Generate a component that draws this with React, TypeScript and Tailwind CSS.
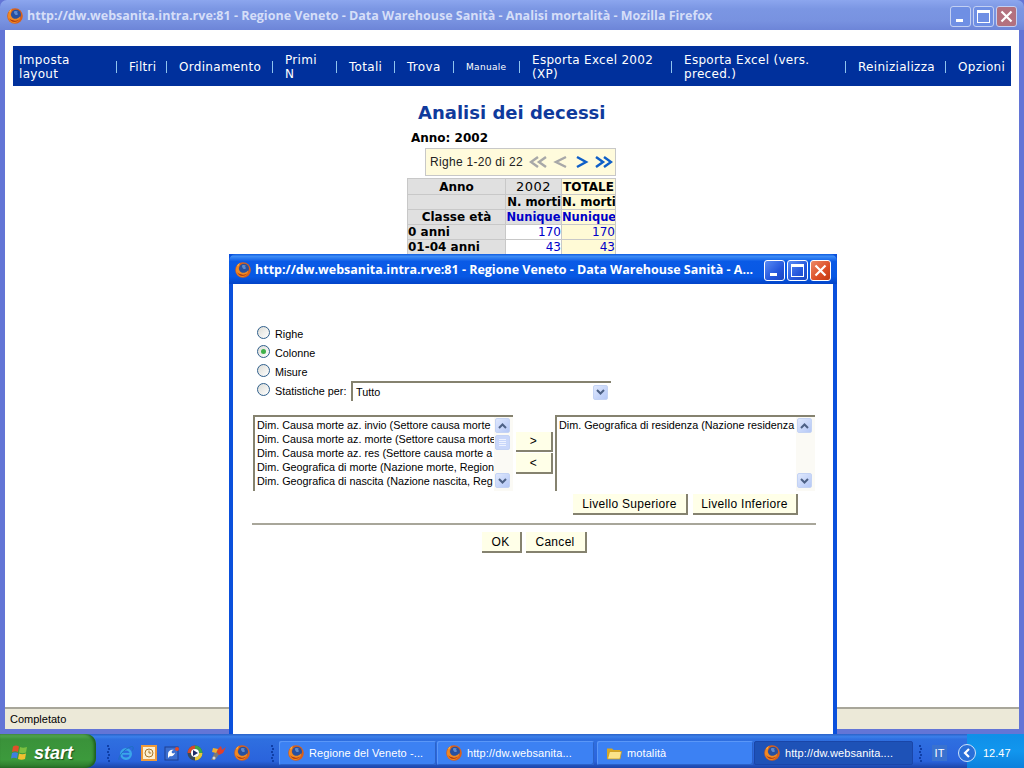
import { type ReactNode } from 'react'

const navItems = [
  { label: 'Imposta layout', width: 'w-[85px]' },
  { label: 'Filtri', width: 'w-[25px]' },
  { label: 'Ordinamento', width: 'w-[81px]' },
  { label: 'Primi N', width: 'w-[39px]' },
  { label: 'Totali', width: 'w-[33px]' },
  { label: 'Trova', width: 'w-[34px]' },
  { label: 'Manuale', width: 'w-[41px]', small: true },
  { label: 'Esporta Excel 2002 (XP)', width: 'w-[127px]' },
  { label: 'Esporta Excel (vers. preced.)', width: 'w-[149px]' },
  { label: 'Reinizializza', width: 'w-[75px]' },
  { label: 'Opzioni', width: 'w-[46px]' },
]

// testo tagliato come nella lista originale
const leftList = [
  'Dim. Causa morte az. invio (Settore causa morte',
  'Dim. Causa morte az. morte (Settore causa morte',
  'Dim. Causa morte az. res (Settore causa morte a',
  'Dim. Geografica di morte (Nazione morte, Region',
  'Dim. Geografica di nascita (Nazione nascita, Reg',
]

function Firefox({ size = 16 }: { size?: number }) {
  return (
    <svg width={size} height={size} viewBox="0 0 16 16" className="shrink-0">
      <circle cx="8" cy="8" r="7.800" fill="#d9601a" />
      <circle cx="9" cy="6.800" r="5" fill="#27509f" />
      <path d="M7 3.500c1.500-.8 3-.5 4 .3-.8.2-1 .8-.5 1.400.7.8.2 1.800-.9 1.900-1 .1-1.600-.6-2.100-1.300C7 5.100 7 4.300 7 3.500z" fill="#5d8ad0" />
      <path d="M1 8c0-3 1.500-5.500 4-7-.6 1-.8 2-.5 2.700C3.400 5 3.400 7 4.300 8.500c1.100 1.800 3.200 2.600 5.200 2.200 1.500-.3 2.900-1.300 3.800-2.700 0 3.300-2.700 7-6 7C4 15 1 12 1 8z" fill="#f08a24" />
      <path d="M2 10c1 2.500 3 4 5.500 4 2 0 4-1 5-3-1.500 1.500-3.500 2-5.500 1.500C5 12 3 11.500 2 10z" fill="#b5400f" />
      <path d="M5 1c-1.500.8-2.600 2.100-3.200 3.500.6-.6 1.300-1 2-1.200C4 2.500 4.400 1.700 5 1z" fill="#fbc04a" />
    </svg>
  )
}

function WinButton({ kind, inactive }: { kind: 'min' | 'max' | 'close'; inactive?: boolean }) {
  let bg = inactive ? 'bg-[#6f8fe4]' : 'bg-[linear-gradient(135deg,#5a8cf5,#2456dc_60%,#1c46c0)]'
  if (kind === 'close') {
    bg = inactive ? 'bg-[#b3717f]' : 'bg-[linear-gradient(135deg,#ec8a68,#dc4e26_60%,#c23a12)]'
  }
  return (
    <div
      className={`flex h-[21px] w-[21px] items-center justify-center rounded-[3px] border ${inactive ? 'border-[#c3d0f3]' : 'border-white'} ${bg}`}
    >
      {kind === 'min' && <div className="mt-[9px] -ml-[3px] h-[3px] w-[7px] bg-white" />}
      {kind === 'max' && <div className="h-[13px] w-[13px] border border-t-[3px] border-white" />}
      {kind === 'close' && (
        <svg width="13" height="13" viewBox="0 0 13 13">
          <path d="M1.500 1.500l10 10M11.500 1.500l-10 10" stroke="#fff" strokeWidth="2.200" />
        </svg>
      )}
    </div>
  )
}

function Radio({ checked }: { checked?: boolean }) {
  return (
    <div className="flex h-[13px] w-[13px] shrink-0 items-center justify-center rounded-full border border-[#2f5f8c] bg-[linear-gradient(135deg,#dcdcd6,#ffffff)]">
      {checked && <div className="h-[5px] w-[5px] rounded-full bg-[#3fb14a]" />}
    </div>
  )
}

function ScrollArrow({ up }: { up?: boolean }) {
  return (
    <div className="flex h-[15px] w-[15px] items-center justify-center rounded-[2px] border border-[#c4d3f4] bg-[linear-gradient(135deg,#dfe8fd,#b5c8f6)]">
      <svg width="9" height="6" viewBox="0 0 9 6">
        <path d={up ? 'M1 5l3.500-3.500L8 5' : 'M1 1l3.500 3.500L8 1'} fill="none" stroke="#4d6185" strokeWidth="2" />
      </svg>
    </div>
  )
}

function ListBox({ items, thumb }: { items: string[]; thumb?: boolean }) {
  return (
    <div className="flex h-[76px] w-[260px] shrink-0 border-t-2 border-l-2 border-[#85826f] bg-white">
      <div className="min-w-0 flex-1 overflow-hidden pt-px pl-[2px]">
        {items.map((item) => (
          <div key={item} className="h-[14px] overflow-hidden text-[10.800px] leading-[14px] whitespace-nowrap text-black">
            {item}
          </div>
        ))}
      </div>
      <div className="flex w-[19px] shrink-0 flex-col justify-between bg-[#fbfaf5] pt-px pr-[3px] pb-[3px] pl-px">
        <div>
          <ScrollArrow up />
          {thumb && (
            <div className="mt-[2px] flex h-[15px] w-[15px] flex-col items-center justify-center gap-px rounded-[2px] border border-[#c4d3f4] bg-[#c9d7fa]">
              <div className="h-px w-[7px] bg-[#eef3ff]" />
              <div className="h-px w-[7px] bg-[#eef3ff]" />
              <div className="h-px w-[7px] bg-[#eef3ff]" />
              <div className="h-px w-[7px] bg-[#eef3ff]" />
            </div>
          )}
        </div>
        <ScrollArrow />
      </div>
    </div>
  )
}

function Btn({ children, width, height = 'h-[21px]' }: { children: ReactNode; width: string; height?: string }) {
  return (
    <div
      className={`flex items-center justify-center border-r-2 border-b-2 border-[#85826f] bg-[#ffffe8] text-[12px] tracking-[0.3px] text-black ${width} ${height}`}
    >
      {children}
    </div>
  )
}

function Grip() {
  return (
    <div className="flex w-[3px] shrink-0 flex-col gap-px">
      {[0, 1, 2, 3, 4, 5].map((i) => (
        <div key={i} className={`h-[2px] w-[2px] bg-[#0f3fa8] ${i % 2 ? 'ml-px' : ''}`} />
      ))}
    </div>
  )
}

function TaskButton({ icon, label, active, width }: { icon: ReactNode; label: string; active?: boolean; width: string }) {
  return (
    <div
      className={`flex h-[24px] shrink-0 items-center gap-[5px] rounded-[2px] pl-[9px] text-[11px] tracking-[0.1px] whitespace-nowrap text-white ${width} ${active ? 'border border-[#1a46a8] bg-[#1e52b7]' : 'bg-[#3c81f3] shadow-[inset_1px_1px_0_#5a97f8,inset_-1px_-1px_0_#2b62c8]'}`}
    >
      {icon}
      <span>{label}</span>
    </div>
  )
}

function Folder() {
  return (
    <svg width="16" height="14" viewBox="0 0 16 14" className="shrink-0">
      <path d="M1 2.500h5l1.500 1.500H14v9H1z" fill="#d8a823" />
      <path d="M1.500 13L3.500 5.500H15.500L14 13z" fill="#fbe38a" stroke="#c99a1e" strokeWidth=".8" />
    </svg>
  )
}

function QuickLaunch() {
  return (
    <div className="flex items-center gap-[7px]">
      <svg width="16" height="16" viewBox="0 0 16 16">
        <circle cx="8" cy="9" r="4.800" fill="none" stroke="#3aa6ea" strokeWidth="2.400" />
        <path d="M3.500 8.800h9.500" stroke="#3aa6ea" strokeWidth="1.800" />
        <rect x="9.500" y="10" width="5" height="1.800" fill="#00000000" />
        <path d="M1 15C0 12.500 5 4 13.500 1.500c2-.3 2.200 1.500 1 4" fill="none" stroke="#1d6fc0" strokeWidth="1" />
      </svg>
      <div className="flex h-[16px] w-[16px] items-center justify-center border-2 border-[#ee9a3a] bg-[#fdf0d0]">
        <svg width="10" height="10" viewBox="0 0 10 10">
          <circle cx="5" cy="5" r="4" fill="none" stroke="#a8762a" strokeWidth="1" />
          <path d="M5 2.500V5h2.200" fill="none" stroke="#a8762a" strokeWidth="1" />
        </svg>
      </div>
      <svg width="16" height="16" viewBox="0 0 16 16">
        <rect x="1" y="2" width="13" height="13" fill="#3c6fd0" stroke="#1c3f90" />
        <path d="M4 9c0-3 3-5 6-4-2 0-3 2-2 3s3 0 3-1c0 3-3 5-5 4l-2 2z" fill="#fff" />
        <circle cx="13" cy="4" r="2" fill="#e04a2a" />
      </svg>
      <svg width="16" height="16" viewBox="0 0 16 16">
        <circle cx="8" cy="8" r="7.500" fill="#3a4a5a" />
        <path d="M8 .5A7.500 7.500 0 0 1 15.500 8H12A4 4 0 0 0 8 4z" fill="#3aa84a" />
        <path d="M.5 8A7.500 7.500 0 0 1 8 .5V4a4 4 0 0 0-4 4z" fill="#d84a2a" />
        <path d="M8 15.500A7.500 7.500 0 0 0 15.500 8H12a4 4 0 0 1-4 4z" fill="#e8c83a" />
        <circle cx="8" cy="8" r="4" fill="#fff" />
        <path d="M6 5l5 3-5 3z" fill="#1d2a66" />
      </svg>
      <svg width="17" height="16" viewBox="0 0 17 16">
        <path d="M1 15L6 5l4 3-5 7z" fill="#7a7a7a" />
        <path d="M6 6l5-5 1 4 4-3-3 6-4 2z" fill="#e0402a" />
        <path d="M3 3l5 1-2 4-4-1z" fill="#f0b030" />
        <circle cx="4" cy="13" r="1.500" fill="#d5d5d5" />
      </svg>
      <Firefox />
    </div>
  )
}

export default function App() {
  return (
    <div className="relative flex h-[768px] w-[1024px] flex-col overflow-hidden bg-white font-['Liberation_Sans',sans-serif]">
      <div className="relative min-h-0 flex-1">
        {/* finestra principale */}
        <div className="flex h-full flex-col bg-[#6375d6] px-[5px] pb-[5px]">
          <div className="-mx-[5px] flex h-[30px] shrink-0 items-center rounded-t-[7px] bg-[linear-gradient(#8ca6ee,#7b96e3_30%,#7892e0_70%,#6d85d8)] pt-[2px] pr-[7px] pl-[7px]">
            <Firefox />
            <div className="ml-[4px] flex-1 font-['Open_Sans',sans-serif] text-[12.500px] font-bold whitespace-nowrap text-[#d5def8]">
              http://dw.websanita.intra.rve:81 - Regione Veneto - Data Warehouse Sanità - Analisi mortalità - Mozilla Firefox
            </div>
            <div className="flex gap-[2px]">
              <WinButton kind="min" inactive />
              <WinButton kind="max" inactive />
              <WinButton kind="close" inactive />
            </div>
          </div>
          <div className="flex min-h-0 flex-1 flex-col bg-white pt-[16px]">
            <div className="mr-[8px] ml-[8px] flex h-[40px] shrink-0 items-center bg-[#00309c] pt-px pl-[6px] font-['DejaVu_Sans',sans-serif] text-[12px] leading-[14px] tracking-[0.3px] text-white">
              {navItems.map((item, i) => (
                <div key={item.label} className="flex items-center">
                  {i > 0 && <div className="mr-[12px] ml-[12px] h-[12px] w-px bg-[#8fc4ee]" />}
                  <div className={`${item.width} ${item.small ? 'text-[9px]' : ''}`}>{item.label}</div>
                </div>
              ))}
            </div>
            <div className="flex-1 font-['DejaVu_Sans',sans-serif]">
              <div className="mt-[16px] pl-[413px] text-[18px] leading-[22px] font-bold text-[#0f3a9c]">Analisi dei decessi</div>
              <div className="mt-[6px] pl-[406px] text-[12px] leading-[16px] font-bold text-black">Anno: 2002</div>
              <div className="mt-[2px] ml-[420px] flex h-[28px] w-[191px] items-center border border-[#c8c8c8] bg-[#fffbdc] pb-px pl-[4px] font-['Liberation_Sans',sans-serif] text-[12px] tracking-[0.3px] text-[#222]">
                <span>Righe 1-20 di 22</span>
                <svg width="84" height="14" viewBox="0 0 84 14" className="ml-[6px]">
                  <path d="M9 2L2 7l7 5M17 2L10 7l7 5" fill="none" stroke="#a8a8a8" strokeWidth="2.500" />
                  <path d="M37 2l-10 5 10 5" fill="none" stroke="#a8a8a8" strokeWidth="2.500" />
                  <path d="M48 2l9 5-9 5" fill="none" stroke="#0f5fc8" strokeWidth="2.500" />
                  <path d="M67 2l7 5-7 5M75 2l7 5-7 5" fill="none" stroke="#0f5fc8" strokeWidth="2.500" />
                </svg>
              </div>
              <table className="mt-[2px] ml-[402px] w-[208px] table-fixed border-collapse text-[12px] leading-[14px] text-black">
                <colgroup>
                  <col className="w-[98px]" />
                  <col className="w-[56px]" />
                  <col className="w-[54px]" />
                </colgroup>
                <tbody className="[&_td]:h-[15px] [&_td]:overflow-hidden [&_td]:border [&_td]:border-[#c8c8c8] [&_td]:p-0 [&_td]:whitespace-nowrap">
                  <tr className="[&_td]:h-[16px]">
                    <td className="bg-[#e0e0e0] text-center font-bold">Anno</td>
                    <td className="bg-[#e0e0e0] text-center text-[13px] tracking-[0.5px]">2002</td>
                    <td className="bg-[#fffad6] text-center font-bold">TOTALE</td>
                  </tr>
                  <tr>
                    <td className="bg-[#e0e0e0]" />
                    <td className="bg-[#e0e0e0] text-right text-[11.700px] font-bold">N. morti</td>
                    <td className="bg-[#fffad6] text-right text-[11.700px] font-bold">N. morti</td>
                  </tr>
                  <tr>
                    <td className="bg-[#e0e0e0] text-center font-bold">Classe età</td>
                    <td className="bg-[#e0e0e0] text-center text-[11.500px] font-bold text-[#0000c8]">Nunique</td>
                    <td className="bg-[#fffad6] text-center text-[11.500px] font-bold text-[#0000c8]">Nunique</td>
                  </tr>
                  <tr>
                    <td className="bg-[#e0e0e0] font-bold">0 anni</td>
                    <td className="bg-white pr-px text-right text-[#0000c8]">170</td>
                    <td className="bg-[#fffad6] pr-px text-right text-[#0000c8]">170</td>
                  </tr>
                  <tr>
                    <td className="bg-[#e0e0e0] font-bold">01-04 anni</td>
                    <td className="bg-white pr-px text-right text-[#0000c8]">43</td>
                    <td className="bg-[#fffad6] pr-px text-right text-[#0000c8]">43</td>
                  </tr>
                </tbody>
              </table>
            </div>
            <div className="flex h-[22px] shrink-0 items-center border-t-2 border-[#a8a69a] bg-[#ece9d8] pl-[5px] font-['Liberation_Sans',sans-serif] text-[11px] text-black">
              Completato
            </div>
          </div>
        </div>

        {/* finestra di dialogo */}
        <div className="absolute top-[254px] bottom-0 left-[229px] flex w-[608px] flex-col bg-[#0a50dc] px-[4px]">
          <div className="-mx-[4px] flex h-[30px] shrink-0 items-center rounded-t-[7px] bg-[linear-gradient(#0f5ce0,#3d8cf5_8%,#0a5ae6_25%,#0758e4_75%,#0344c8)] pt-[2px] pr-[6px] pl-[6px]">
            <Firefox />
            <div className="ml-[4px] min-w-0 flex-1 overflow-hidden font-['Open_Sans',sans-serif] text-[12.500px] font-bold whitespace-nowrap text-white">
              http://dw.websanita.intra.rve:81 - Regione Veneto - Data Warehouse Sanità - A...
            </div>
            <div className="ml-[6px] flex gap-[2px]">
              <WinButton kind="min" />
              <WinButton kind="max" />
              <WinButton kind="close" />
            </div>
          </div>
          <div className="min-h-0 flex-1 bg-white pt-[42px] pl-[20px] text-[10.800px] text-black">
            <div className="pl-[4px]">
              {['Righe', 'Colonne', 'Misure'].map((label) => (
                <div key={label} className="flex h-[19px] items-start gap-[5px]">
                  <Radio checked={label === 'Colonne'} />
                  <span className="mt-px leading-[14px]">{label}</span>
                </div>
              ))}
              <div className="flex h-[19px] items-start gap-[5px]">
                <Radio />
                <span className="mt-px w-[72px] leading-[14px] whitespace-nowrap">Statistiche per:</span>
                <div className="-mt-[2px] -ml-[1px] flex h-[20px] w-[260px] items-center border-t-2 border-l-2 border-[#85826f] bg-white pl-[3px]">
                  <span className="flex-1">Tutto</span>
                  <div className="mr-[3px]">
                    <ScrollArrow />
                  </div>
                </div>
              </div>
            </div>
            <div className="mt-[13px] flex items-start">
              <ListBox items={leftList} thumb />
              <div className="mt-[17px] ml-[3px] flex flex-col gap-px">
                <Btn width="w-[37px]" height="h-[20px]">&gt;</Btn>
                <Btn width="w-[37px]">&lt;</Btn>
              </div>
              <div className="ml-[2px]">
                <ListBox items={['Dim. Geografica di residenza (Nazione residenza']} />
              </div>
            </div>
            <div className="mt-[3px] ml-[320px] flex gap-[5px]">
              <Btn width="w-[115px]">Livello Superiore</Btn>
              <Btn width="w-[105px]">Livello Inferiore</Btn>
            </div>
            <div className="mt-[8px] -ml-px h-[2px] w-[564px] bg-[#a8a69a]" />
            <div className="mt-[7px] -ml-px flex w-[564px] justify-center gap-[4px]">
              <Btn width="w-[40px]">OK</Btn>
              <Btn width="w-[61px]">Cancel</Btn>
            </div>
          </div>
        </div>
      </div>

      {/* barra delle applicazioni */}
      <div className="flex h-[34px] shrink-0 items-center bg-[linear-gradient(#2a62c8,#3c80ea_8%,#2f6fe0_15%,#2a63dc_80%,#1c45a8)]">
        <div className="flex h-full w-[96px] shrink-0 items-center rounded-r-[10px] bg-[linear-gradient(#5cae5c,#3a923a_15%,#3c9a3c_75%,#2a752a)] pt-[4px] pl-[10px] shadow-[inset_-2px_0_3px_#1d5c1d]">
          <svg width="20" height="20" viewBox="0 0 20 20" className="shrink-0">
            <path d="M3 3.500c2-1.200 4-1.200 6 0L8 9C6 8 4.200 8 2 9z" fill="#e0502a" />
            <path d="M10 4c2 1.100 4 1.100 7 0l-1 5.500c-2.500 1-4.500 1-7 0z" fill="#7cc040" />
            <path d="M2 10c2-1 4-1 6 0l-1 5.500c-2-1-4-1-6 0z" fill="#3f7fe0" />
            <path d="M9 10.500c2.300 1 4.500 1 7 0L15 16c-2.500 1-4.500 1-7 0z" fill="#f0c030" />
          </svg>
          <span className="ml-[4px] text-[18px] font-bold text-white italic [text-shadow:1px_1px_1px_#1d4d1d]">start</span>
        </div>
        <div className="flex h-full items-center pt-[4px]">
          <div className="ml-[11px]"><Grip /></div>
          <div className="ml-[8px]"><QuickLaunch /></div>
          <div className="ml-[21px]"><Grip /></div>
          <div className="ml-[5px] flex gap-px">
            <TaskButton icon={<Firefox />} label="Regione del Veneto -..." width="w-[157px]" />
            <TaskButton icon={<Firefox />} label="http://dw.websanita..." width="w-[157px]" />
            <div className="w-px" />
            <TaskButton icon={<Folder />} label="motalità" width="w-[156px]" />
            <TaskButton icon={<Firefox />} label="http://dw.websanita...." active width="w-[159px]" />
          </div>
          <div className="ml-[6px]"><Grip /></div>
          <div className="ml-[10px] flex h-[16px] w-[15px] items-center justify-center bg-[#3a72cf] text-[11px] text-white">IT</div>
        </div>
        <div className="ml-[20px] flex h-full flex-1 items-center bg-[linear-gradient(#0f8fe8,#1196ee_50%,#0c80dc)] pt-[4px] text-[11px] text-white">
          <div className="-ml-[9px] flex h-[18px] w-[18px] items-center justify-center rounded-full border border-[#cfe4fb] bg-[#2a6fd8]">
            <svg width="8" height="10" viewBox="0 0 8 10">
              <path d="M6 1L2 5l4 4" fill="none" stroke="#fff" strokeWidth="2.200" />
            </svg>
          </div>
          <span className="ml-[7px]">12.47</span>
        </div>
      </div>
    </div>
  )
}
